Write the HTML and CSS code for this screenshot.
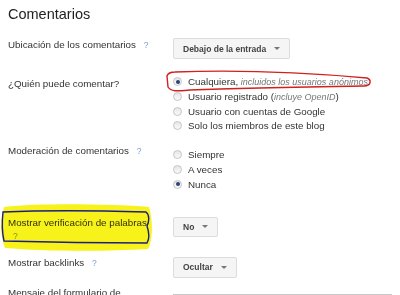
FILE: index.html
```html
<!DOCTYPE html>
<html lang="es">
<head>
    <meta charset="UTF-8">
    <title>Comentarios</title>
    <link rel="stylesheet" href="styles.css">
</head>
<body>
    <div class="page">
        <h1 class="title">Comentarios</h1>

        <div class="row row-location">
            <div class="label">Ubicación de los comentarios <span class="help">?</span></div>
            <div class="control">
                <span class="btn">Debajo de la entrada<span class="caret"></span></span>
            </div>
        </div>

        <div class="row row-who">
            <div class="label label-low">¿Quién puede comentar?</div>
            <div class="control">
                <div class="option"><span class="radio on"></span>Cualquiera,&nbsp;<em class="note">incluidos los usuarios anónimos</em></div>
                <div class="option"><span class="radio"></span>Usuario registrado (<em class="note">incluye OpenID</em>)</div>
                <div class="option"><span class="radio"></span>Usuario con cuentas de Google</div>
                <div class="option"><span class="radio"></span>Solo los miembros de este blog</div>
            </div>
        </div>

        <div class="row row-moderation">
            <div class="label">Moderación de comentarios <span class="help">?</span></div>
            <div class="control control-low">
                <div class="option"><span class="radio"></span>Siempre</div>
                <div class="option"><span class="radio"></span>A veces</div>
                <div class="option"><span class="radio on"></span>Nunca</div>
            </div>
        </div>

        <div class="row row-captcha">
            <div class="label">Mostrar verificación de palabras <span class="help">?</span></div>
            <div class="control">
                <span class="btn btn-short">No<span class="caret"></span></span>
            </div>
        </div>

        <div class="row row-backlinks">
            <div class="label">Mostrar backlinks <span class="help">?</span></div>
            <div class="control">
                <span class="btn">Ocultar<span class="caret"></span></span>
            </div>
        </div>

        <div class="row row-message">
            <div class="label">Mensaje del formulario de comentarios</div>
            <div class="control">
                <div class="box"></div>
            </div>
        </div>
    </div>

    <!-- hand-drawn marks on top of the screenshot -->
    <svg class="marks" width="400" height="295" viewBox="0 0 400 295">
        <path d="M4 207 C40 203, 110 204, 149 207 C153 220, 153 240, 148 249 C100 252, 40 251, 5 248 C0 236, 0 221, 4 207 Z" fill="#f7f31a"/>
        <path d="M3 212 C50 210, 110 211, 146 212 C150 215, 149 222, 147 226 C149 232, 150 238, 147 243 C100 243, 40 242, 4 241 C2 232, 2 221, 3 212 Z" fill="none" stroke="#1c1c8a" stroke-width="1.4"/>
        <path d="M175 72 C230 70, 300 72, 367 78 C372 80, 371 86, 364 86 C300 87, 240 88, 190 90 C178 91, 171 92, 168 87 L167 76 C168 73, 171 72, 175 72" fill="none" stroke="#d21f1f" stroke-width="1.4"/>
    </svg>
</body>
</html>
```

FILE: styles.css
```css
body {
    margin: 0;
    padding: 0;
    background-color: #fff;
    font-family: "Liberation Sans", Arial, sans-serif;
    color: #333;
    overflow: hidden;
}

.page {
    padding: 0 8px;
}

.title {
    margin: 5.5px 0 0;
    font-size: 14.5px;
    line-height: 17px;
    font-weight: normal;
    color: #222;
}

.row {
    display: grid;
    grid-template-columns: 150px 1fr;
    column-gap: 15px;
    align-items: start;
}

.label {
    font-size: 9.8px;
    line-height: 13px;
    color: #333;
}

.label-low {
    padding-top: 2px;
}

.help {
    margin-left: 5px;
    font-size: 8.5px;
    color: #7f9bd3;
}

.control {
    font-size: 9.8px;
    color: #333;
}

.control-low {
    padding-top: 3.2px;
}

.option {
    display: flex;
    align-items: center;
    height: 14.6px;
    white-space: nowrap;
}

.note {
    font-size: 9px;
    color: #777;
}

.radio {
    width: 7px;
    height: 7px;
    margin-right: 6px;
    border: 1px solid #c4c4c4;
    border-radius: 50%;
    background: linear-gradient(#e6e6e6, #fafafa);
    box-sizing: content-box;
    display: inline-flex;
    align-items: center;
    justify-content: center;
}

.radio.on::after {
    content: "";
    width: 4px;
    height: 4px;
    border-radius: 50%;
    background-color: #2b4377;
}

.btn {
    display: inline-flex;
    align-items: center;
    height: 19px;
    padding: 0 9px 0 9px;
    border: 1px solid #dcdcdc;
    border-radius: 2px;
    background-color: #f5f5f5;
    font-size: 8.5px;
    font-weight: bold;
    color: #444;
}

.caret {
    width: 0;
    height: 0;
    margin-left: 8px;
    border-left: 3px solid transparent;
    border-right: 3px solid transparent;
    border-top: 3px solid #777;
}

.row-location {
    margin-top: 15.5px;
}

.row-who {
    margin-top: 15.7px;
}

.row-moderation {
    margin-top: 11.4px;
}

.row-captcha {
    margin-top: 25px;
}

.row-captcha .btn {
    height: 18px;
    margin-top: 0.5px;
}

.row-backlinks {
    margin-top: 13px;
}

.row-backlinks .btn {
    margin-top: 0.5px;
}

.row-message {
    margin-top: 8.5px;
}

.box {
    margin-top: 7.5px;
    height: 20px;
    border-top: 1px solid #c8c8c8;
}

.marks {
    position: absolute;
    left: 0;
    top: 0;
    pointer-events: none;
    mix-blend-mode: multiply;
}
```
